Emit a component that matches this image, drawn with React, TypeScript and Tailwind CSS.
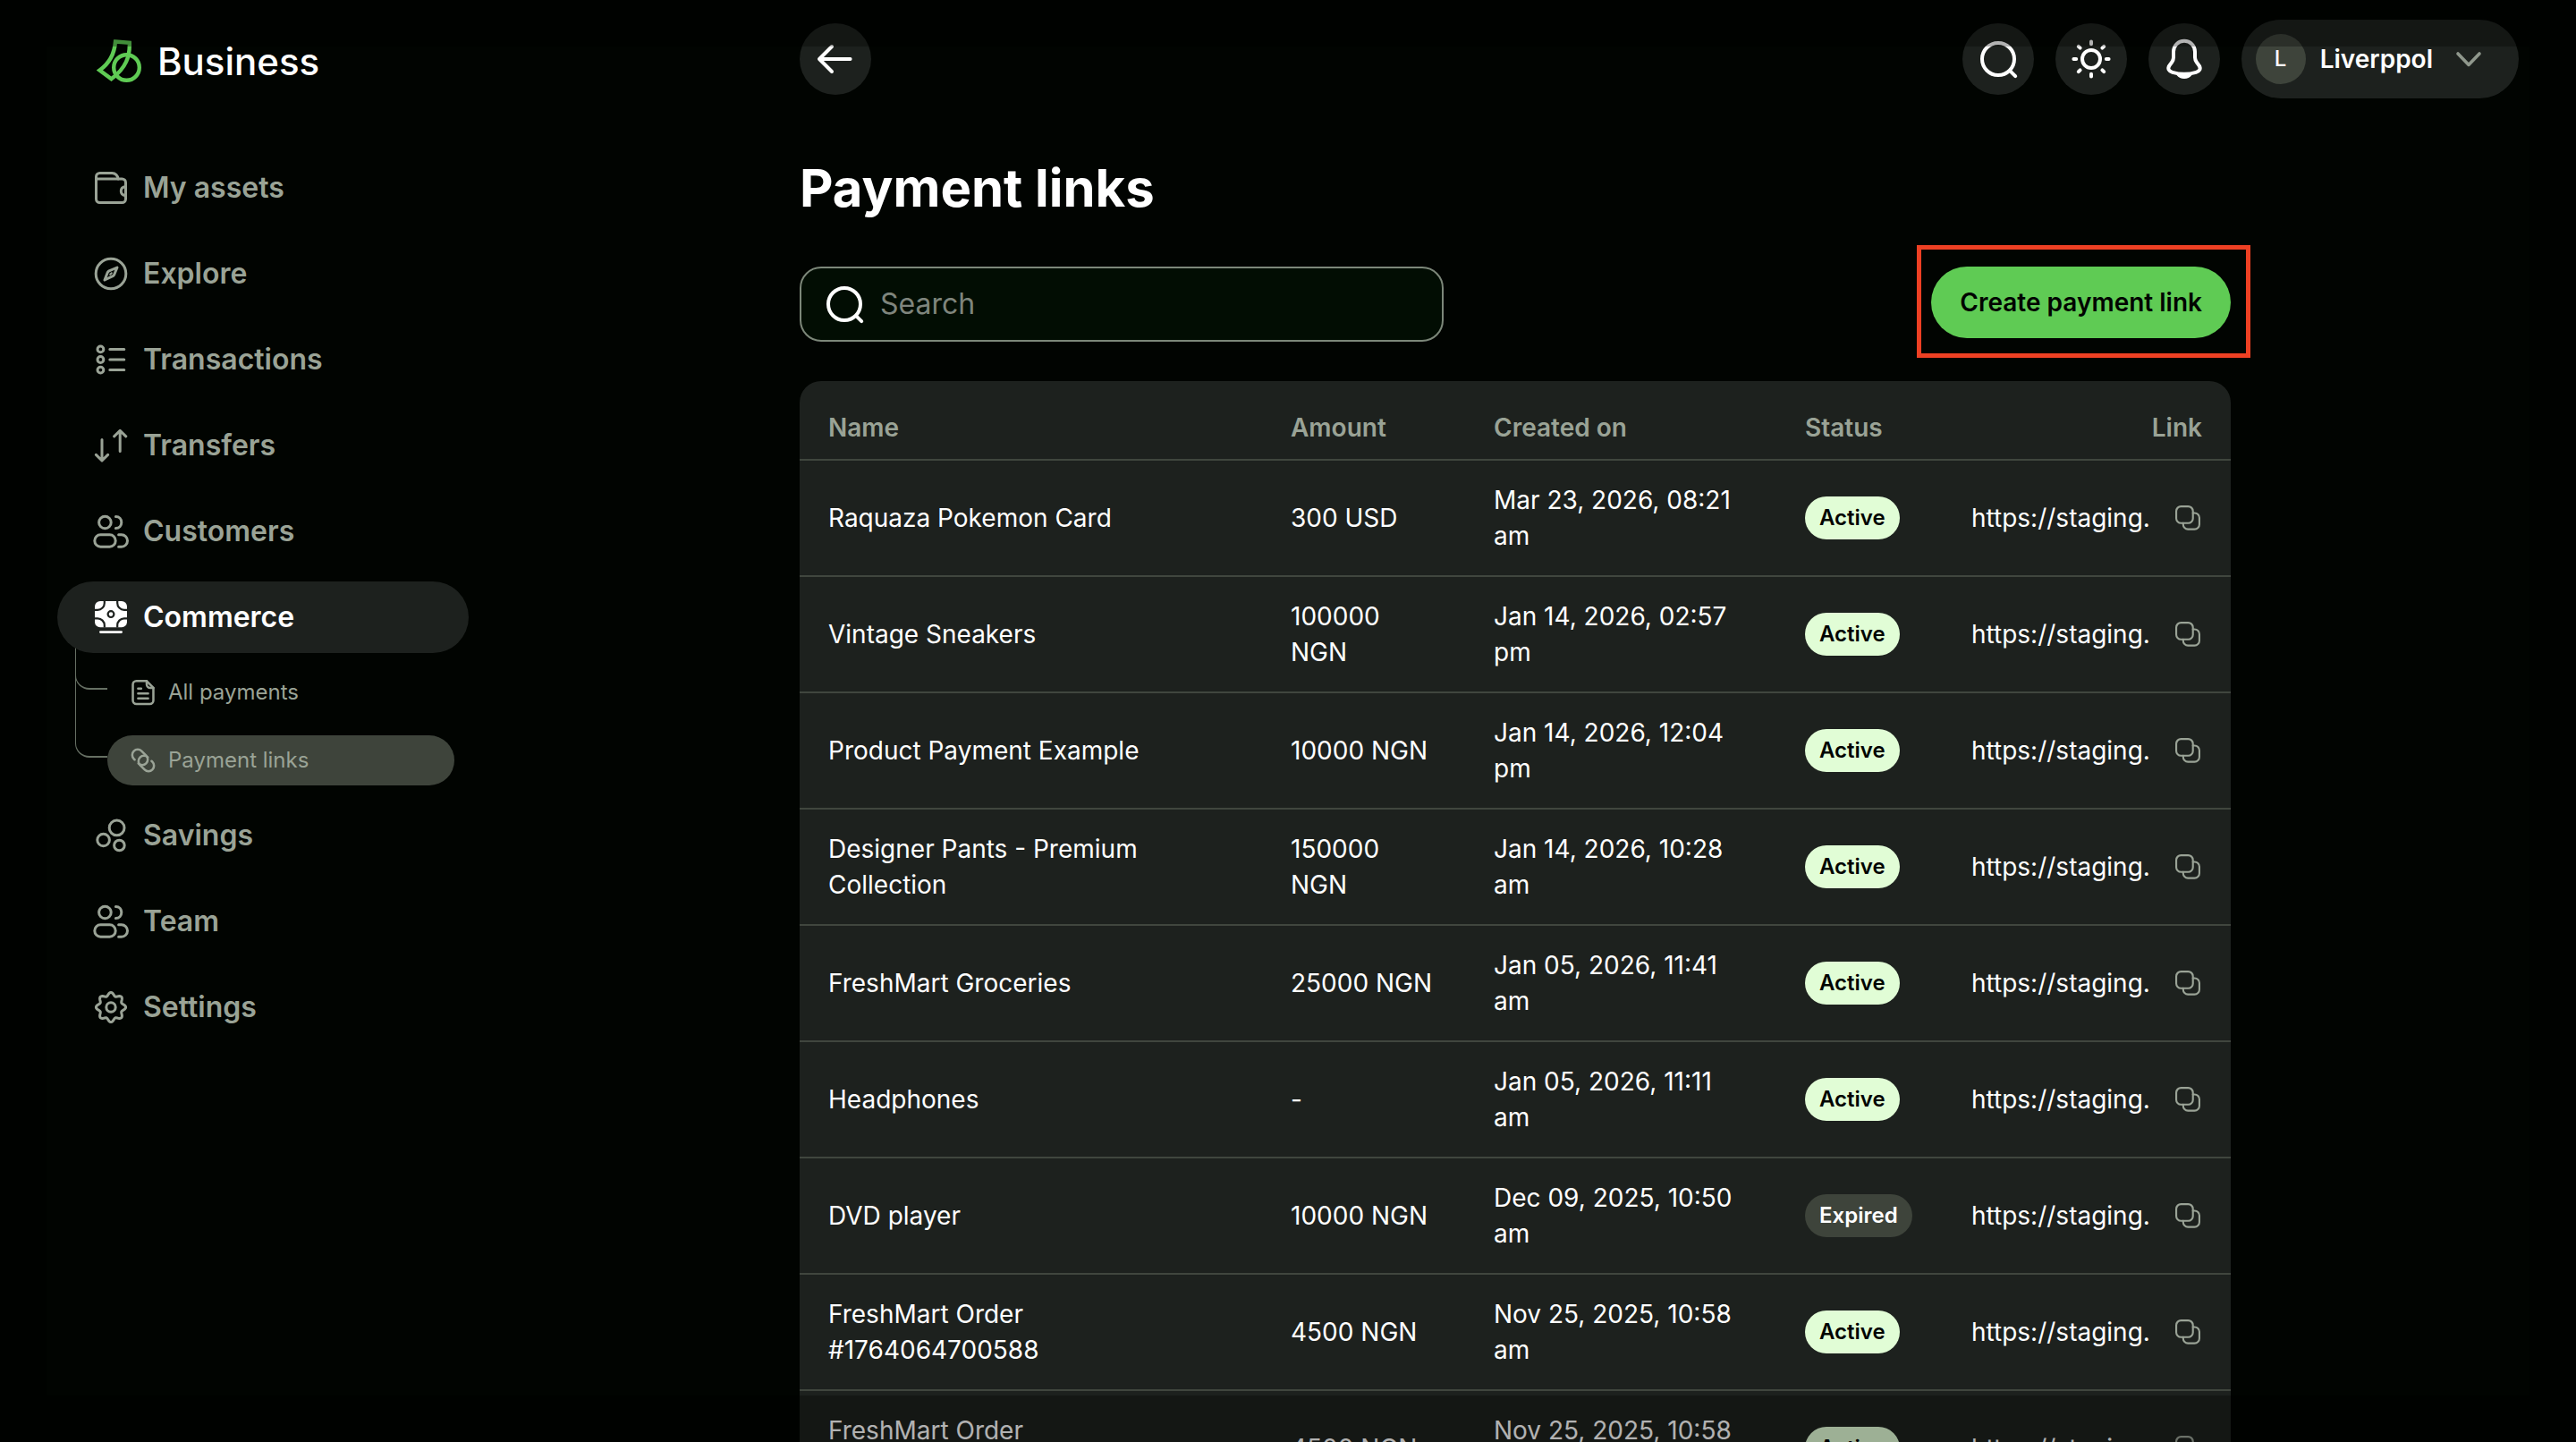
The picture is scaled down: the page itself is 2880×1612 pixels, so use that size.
import React from "react";
import type { ReactNode } from "react";

/* ---------- icons ---------- */

type IconProps = { className?: string; strokeWidth?: number; children?: ReactNode };

function Icon({ className = "size-12", strokeWidth = 1.5, children }: IconProps) {
  return (
    <svg
      viewBox="0 0 24 24"
      className={className}
      fill="none"
      stroke="currentColor"
      strokeWidth={strokeWidth}
      strokeLinecap="round"
      strokeLinejoin="round"
      aria-hidden="true"
    >
      {children}
    </svg>
  );
}

const LogoMark = () => (
  <svg viewBox="0 0 50 50" className="size-[50px]" fill="none" stroke="currentColor" strokeWidth="4.4" aria-hidden="true">
    <path d="M21 3.5 36.8 4.8C37.3 20 33 33 16.5 45.2L3.4 35.5C14 28 20 17 21 3.5Z" />
    <circle cx="33.5" cy="32.5" r="14.3" />
  </svg>
);

const WalletIcon = () => (
  <Icon>
    <path d="M3.75 7V5.75a2 2 0 0 1 2-2h6.9A3.4 3.4 0 0 1 16 7" />
    <path d="M3.75 7h14.5a2 2 0 0 1 2 2v9.25a2 2 0 0 1-2 2H5.75a2 2 0 0 1-2-2z" />
    <path d="M20.25 11.2c-1.8.2-2.6 1.2-2.6 2.6s.8 2.4 2.6 2.6" />
  </Icon>
);

const CompassIcon = () => (
  <Icon>
    <circle cx="12" cy="12" r="8.4" />
    <path d="M15.5 8.5l-1.6 3.9a1.8 1.8 0 0 1-.6.8L8.5 15.5l1.6-4.1a1.8 1.8 0 0 1 .6-.8z" />
    <path d="M11.6 12.4l.8-.8" strokeWidth="1" />
  </Icon>
);

const ListIcon = () => (
  <Icon>
    <circle cx="6.2" cy="6.2" r="1.7" />
    <circle cx="6.2" cy="12" r="1.7" />
    <circle cx="6.2" cy="17.8" r="1.7" />
    <path d="M11.4 6.2h8M11.4 12h8M11.4 17.8h8" />
  </Icon>
);

const TransferIcon = () => (
  <Icon>
    <path d="M7 8.7v11.8M3.7 17.2L7 20.4l3.3-3.2M17.1 15.2V3.7M13.8 6.9l3.3-3.2 3.3 3.2" />
  </Icon>
);

const PeopleIcon = () => (
  <Icon>
    <circle cx="8.7" cy="7" r="3.4" />
    <path d="M14.7 3.7c1.9 0 3.2 1.5 3.2 3.3s-1.3 3.3-3.2 3.3" />
    <rect x="2.9" y="13.9" width="11.7" height="6.7" rx="3.3" />
    <path d="M16.3 13.9h1.6a3.35 3.35 0 0 1 0 6.7h-1.6" />
  </Icon>
);

const CommerceIcon = () => (
  <Icon>
    <rect x="3" y="3" width="18" height="14.6" rx="3" fill="currentColor" stroke="none" />
    <g stroke="#1d211e" strokeWidth="1.1" strokeLinecap="butt">
      <path d="M8.4 2.8v1.3a3.8 3.8 0 0 1-3.8 3.8H2.8M15.6 2.8v1.3a3.8 3.8 0 0 0 3.8 3.8h1.8M8.4 17.8v-1.3a3.8 3.8 0 0 0-3.8-3.8H2.8M15.6 17.8v-1.3a3.8 3.8 0 0 1 3.8-3.8h1.8" />
      <circle cx="12" cy="10.3" r="1.7" />
    </g>
    <path d="M6.2 20.3h11.6" strokeWidth="1.4" />
  </Icon>
);

const SavingsIcon = () => (
  <Icon>
    <circle cx="15.3" cy="7.7" r="4.2" />
    <circle cx="7.8" cy="14.5" r="3.4" />
    <circle cx="16.7" cy="17.5" r="2.9" />
  </Icon>
);

const GEAR_PATH =
  Array.from({ length: 96 }, (_, i) => {
    const t = (i / 96) * Math.PI * 2;
    const r = 7.35 + 0.95 * Math.cos(8 * t);
    return `${i ? "L" : "M"}${(12 + r * Math.cos(t)).toFixed(2)} ${(12 + r * Math.sin(t)).toFixed(2)}`;
  }).join("") + "Z";

const GearIcon = () => (
  <Icon>
    <path d={GEAR_PATH} />
    <circle cx="12" cy="12" r="2.6" />
  </Icon>
);

const DocumentIcon = () => (
  <Icon className="size-8" strokeWidth={1.9}>
    <path d="M15 2.5H6.4a3 3 0 0 0-3 3v13.2a3 3 0 0 0 3 3h11.2a3 3 0 0 0 3-3V8.2z" />
    <path d="M15 2.5v2.7a3 3 0 0 0 3 3h2.6M7.8 8.8h2.6M7.8 12.9h8.4M7.8 17h8.4" />
  </Icon>
);

const ChainIcon = () => (
  <Icon className="size-8" strokeWidth={1.9}>
    <g transform="translate(12 12) rotate(45)">
      <path d="M-5.4 4.6H-6.4A4.6 4.6 0 0 1-6.4-4.6H-1A4.6 4.6 0 0 1-1 4.6" />
      <path d="M5.4-4.6H6.4A4.6 4.6 0 0 1 6.4 4.6H1A4.6 4.6 0 0 1 1-4.6" />
    </g>
  </Icon>
);

const SearchIcon = () => (
  <Icon strokeWidth={2}>
    <circle cx="12" cy="12" r="9" />
    <path d="M18.8 18.8l2.8 2.8" />
  </Icon>
);

const SunIcon = () => (
  <Icon strokeWidth={2}>
    <circle cx="12" cy="12" r="5" />
    <path d="M12 2.2v1.4M12 20.4v1.4M2.2 12h1.4M20.4 12h1.4M4.9 4.9l.9.9M18.2 18.2l.9.9M4.9 19.1l.9-.9M18.2 5.8l.9-.9" />
  </Icon>
);

const BellIcon = () => (
  <Icon strokeWidth={2}>
    <path d="M12 1.9c-3.5 0-6 2.7-6 6v3.2c0 1.1-.3 1.8-1 2.8l-1.2 1.6c-1.4 2-.4 3.3 1.6 3.9 4.4 1.3 8.8 1.3 13.2 0 2-.6 3-1.9 1.6-3.9L19 13.9c-.7-1-1-1.7-1-2.8V7.9c0-3.3-2.5-6-6-6z" />
    <path d="M8.5 20.4c.9 1.2 2.1 1.7 3.5 1.7s2.6-.5 3.5-1.7c-2.3.3-4.7.3-7 0z" strokeWidth="1.8" />
  </Icon>
);

const ArrowLeftIcon = () => (
  <Icon strokeWidth={2}>
    <path d="M3.3 12h17M10 5L3 12l7 7" />
  </Icon>
);

const ChevronIcon = () => (
  <Icon className="size-12 text-[#8f978c]" strokeWidth={1.8}>
    <path d="M6 9l6 6.2L18 9" />
  </Icon>
);

const CopyIcon = () => (
  <Icon className="size-8" strokeWidth={1.6}>
    <rect x="2.3" y="2.3" width="14" height="14" rx="4" />
    <path d="M16.3 7.9h1.4a4 4 0 0 1 4 4v5.6a4 4 0 0 1-4 4h-5.6a4 4 0 0 1-4-4v-1.2" />
  </Icon>
);

/* ---------- data ---------- */

const primaryNav = [
  { label: "My assets", icon: <WalletIcon /> },
  { label: "Explore", icon: <CompassIcon /> },
  { label: "Transactions", icon: <ListIcon /> },
  { label: "Transfers", icon: <TransferIcon /> },
  { label: "Customers", icon: <PeopleIcon /> },
];

const secondaryNav = [
  { label: "Savings", icon: <SavingsIcon /> },
  { label: "Team", icon: <PeopleIcon /> },
  { label: "Settings", icon: <GearIcon /> },
];

type Row = { name: string; amount: string; created: string; status: "Active" | "Expired" };

const rows: Row[] = [
  { name: "Raquaza Pokemon Card", amount: "300 USD", created: "Mar 23, 2026, 08:21 am", status: "Active" },
  { name: "Vintage Sneakers", amount: "100000 NGN", created: "Jan 14, 2026, 02:57 pm", status: "Active" },
  { name: "Product Payment Example", amount: "10000 NGN", created: "Jan 14, 2026, 12:04 pm", status: "Active" },
  { name: "Designer Pants - Premium Collection", amount: "150000 NGN", created: "Jan 14, 2026, 10:28 am", status: "Active" },
  { name: "FreshMart Groceries", amount: "25000 NGN", created: "Jan 05, 2026, 11:41 am", status: "Active" },
  { name: "Headphones", amount: "-", created: "Jan 05, 2026, 11:11 am", status: "Active" },
  { name: "DVD player", amount: "10000 NGN", created: "Dec 09, 2025, 10:50 am", status: "Expired" },
  { name: "FreshMart Order #1764064700588", amount: "4500 NGN", created: "Nov 25, 2025, 10:58 am", status: "Active" },
  { name: "FreshMart Order #1764064700588", amount: "4500 NGN", created: "Nov 25, 2025, 10:58 am", status: "Active" },
];

/* ---------- sidebar ---------- */

function NavItem({ label, icon, active = false }: { label: string; icon: ReactNode; active?: boolean }) {
  return (
    <a
      href="#"
      className={
        active
          ? "relative z-10 flex h-20 items-center gap-3 rounded-full bg-[#1d211e] pl-9 text-[32px] font-semibold text-white"
          : "flex h-20 items-center gap-3 rounded-full pl-9 text-[32px] font-semibold text-[#9aa396]"
      }
    >
      {icon}
      {label}
    </a>
  );
}

function Sidebar() {
  return (
    <aside className="w-[524px] shrink-0 pl-16">
      <a href="#" className="flex h-33 items-center gap-[18px] pt-1 pl-11 text-[#5fcb54]">
        <LogoMark />
        <span className="text-[42px] font-medium text-white">Business</span>
      </a>
      <nav aria-label="Main" className="mt-[38px]">
        <ul className="flex flex-col gap-4">
          {primaryNav.map((item) => (
            <li key={item.label}>
              <NavItem {...item} />
            </li>
          ))}
          <li>
            <NavItem label="Commerce" icon={<CommerceIcon />} active />
            <ul className="mt-4 mr-4 ml-14 flex flex-col gap-5 text-2xl text-[#9aa396]">
              <li className="relative">
                <span className="absolute bottom-[31px] -left-9 h-14 w-9 rounded-bl-2xl border-b-2 border-l border-[#667063]" />
                <a href="#" className="flex h-14 items-center gap-3 rounded-full pl-6">
                  <DocumentIcon />
                  All payments
                </a>
              </li>
              <li className="relative">
                <span className="absolute bottom-[31px] -left-9 h-32 w-9 rounded-bl-2xl border-b-2 border-l border-[#667063]" />
                <a href="#" aria-current="page" className="flex h-14 items-center gap-3 rounded-full bg-[#3e443b] pl-6">
                  <ChainIcon />
                  Payment links
                </a>
              </li>
            </ul>
          </li>
          {secondaryNav.map((item) => (
            <li key={item.label}>
              <NavItem {...item} />
            </li>
          ))}
        </ul>
      </nav>
    </aside>
  );
}

/* ---------- top bar ---------- */

function RoundButton({ label, children }: { label: string; children: ReactNode }) {
  return (
    <button type="button" aria-label={label} className="flex size-20 items-center justify-center rounded-full bg-[#1d211e] text-white">
      {children}
    </button>
  );
}

function TopBar() {
  return (
    <header className="flex h-33 items-center justify-between">
      <RoundButton label="Back">
        <ArrowLeftIcon />
      </RoundButton>
      <div className="flex items-center gap-6">
        <RoundButton label="Search">
          <SearchIcon />
        </RoundButton>
        <RoundButton label="Toggle theme">
          <SunIcon />
        </RoundButton>
        <RoundButton label="Notifications">
          <BellIcon />
        </RoundButton>
        <button type="button" className="flex h-22 items-center gap-4 rounded-full bg-[#1d211e] pr-8 pl-4 text-[28px] font-semibold text-white">
          <span className="flex size-14 items-center justify-center rounded-full bg-[#3e443b] text-2xl font-medium">L</span>
          Liverppol
          <ChevronIcon />
        </button>
      </div>
    </header>
  );
}

/* ---------- table ---------- */

function StatusBadge({ status }: { status: Row["status"] }) {
  return (
    <span
      className={
        status === "Active"
          ? "inline-flex h-12 items-center rounded-full bg-[#e1fdd6] px-4 text-2xl font-semibold text-[#010401]"
          : "inline-flex h-12 items-center rounded-full bg-[#3e443b] px-4 text-2xl font-semibold text-white"
      }
    >
      {status}
    </span>
  );
}

function LinksTable() {
  return (
    <div className="mt-11 rounded-t-3xl bg-[#1d211e] pt-4">
      <table className="w-full table-fixed text-left text-[28px] leading-10 text-white">
        <colgroup>
          <col />
          <col className="w-[227px]" />
          <col className="w-[348px]" />
          <col className="w-[186px]" />
          <col className="w-[322px]" />
        </colgroup>
        <thead className="text-[#9aa396]">
          <tr className="h-18 border-b-2 border-[#40463e]">
            <th scope="col" className="pl-8 font-semibold">Name</th>
            <th scope="col" className="pl-8 font-semibold">Amount</th>
            <th scope="col" className="pl-8 font-semibold">Created on</th>
            <th scope="col" className="pl-8 font-semibold">Status</th>
            <th scope="col" className="pr-8 text-right font-semibold">Link</th>
          </tr>
        </thead>
        <tbody>
          {rows.map((row, i) => (
            <tr key={i} className="h-[130px] border-b-2 border-[#40463e]">
              <td className="pr-20 pl-8">{row.name}</td>
              <td className="px-8">{row.amount}</td>
              <td className="px-8">{row.created}</td>
              <td className="pl-8">
                <StatusBadge status={row.status} />
              </td>
              <td className="px-8">
                <div className="flex items-center justify-between">
                  <a href="#">https://staging.</a>
                  <button type="button" aria-label="Copy link" className="text-[#9aa396]">
                    <CopyIcon />
                  </button>
                </div>
              </td>
            </tr>
          ))}
        </tbody>
      </table>
    </div>
  );
}

/* ---------- page ---------- */

export default function App() {
  return (
    <div className="relative flex h-screen overflow-hidden bg-[#010401] font-['Inter',sans-serif]">
      <Sidebar />
      <main className="min-w-0 flex-1 pr-16 pl-[370px]">
        <TopBar />
        <div className="mt-[38px] max-w-[1600px]">
          <h1 className="text-[58px] leading-20 font-bold text-white">Payment links</h1>
          <div className="mt-12 flex items-start justify-between">
            <label className="flex h-21 w-[720px] items-center gap-4 rounded-3xl border-2 border-[#7c8779] bg-[#020d03] px-6 text-white">
              <SearchIcon />
              <input
                type="search"
                aria-label="Search payment links"
                placeholder="Search"
                className="min-w-0 flex-1 bg-transparent text-[32px] outline-none placeholder:text-[#7f857d]"
              />
            </label>
            <div className="relative">
              <button type="button" className="h-20 rounded-full bg-[#5fcb54] px-8 text-[28px] font-semibold text-[#010401]">
                Create payment link
              </button>
              <span className="pointer-events-none absolute -top-6 -right-[22px] -bottom-[22px] -left-4 border-5 border-[#ee4023]" />
            </div>
          </div>
          <LinksTable />
        </div>
      </main>
      <div className="pointer-events-none absolute inset-0 z-20 border-[52px] border-black/30" />
    </div>
  );
}
